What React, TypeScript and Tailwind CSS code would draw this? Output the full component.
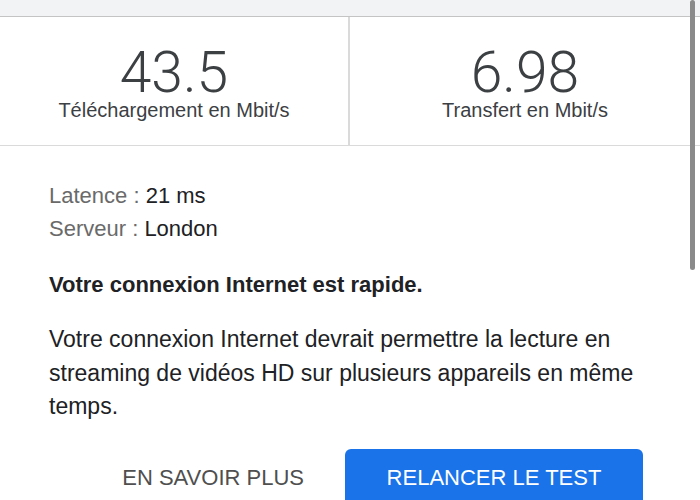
import React from "react";

export default function App() {
  return (
    <div
      className="relative w-[700px] h-[500px] overflow-hidden bg-white"
      style={{ fontFamily: '"Liberation Sans", Arial, sans-serif' }}
    >
      <div className="h-[16px] bg-[#f1f3f4] border-b border-[#c4c4c4] box-content" />
      <div className="grid grid-cols-2 h-[128px] border-b border-[#dadada] box-content">
        <div className="flex flex-col items-center pt-[31px] border-r-2 border-[#dadada]">
          <div className="text-[57px] leading-[50px] font-light text-[#3c4043] font-['Roboto',sans-serif]">43.5</div>
          <div className="mt-[3px] text-[20px] leading-[18px] text-[#3c4043]">Téléchargement en Mbit/s</div>
        </div>
        <div className="flex flex-col items-center pt-[31px]">
          <div className="text-[57px] leading-[50px] font-light text-[#3c4043] font-['Roboto',sans-serif]">6.98</div>
          <div className="mt-[3px] text-[20px] leading-[18px] text-[#3c4043]">Transfert en Mbit/s</div>
        </div>
      </div>
      <div className="pl-[49px] pr-[50px] pt-[33px]">
        <div className="text-[22px] leading-[33px]">
          <span className="text-[#6a6a6a]">Latence : </span>
          <span className="text-[#202124]">21 ms</span>
        </div>
        <div className="text-[22px] leading-[33px]">
          <span className="text-[#6a6a6a]">Serveur : </span>
          <span className="text-[#202124]">London</span>
        </div>
        <div className="mt-[23px] text-[22px] leading-[33px] font-bold text-[#202124]">
          Votre connexion Internet est rapide.
        </div>
        <p className="mt-[22px] text-[23px] leading-[33.5px] text-[#202124]">
          Votre connexion Internet devrait permettre la lecture en streaming de vidéos HD sur plusieurs appareils en même temps.
        </p>
        <div className="mt-[25px] flex justify-end pr-[7px]">
          <button className="h-[58px] px-[41px] flex items-center text-[22px] leading-[24px] text-[#4f4f4f]">
            EN SAVOIR PLUS
          </button>
          <button className="h-[58px] w-[298px] flex items-center justify-center rounded-[6px] bg-[#1a73e8] text-[22px] leading-[24px] text-white">
            RELANCER LE TEST
          </button>
        </div>
      </div>
      <div className="absolute left-[690px] top-0 w-[5px] h-[270px] rounded-full bg-[#8a8a8a]" />
    </div>
  );
}
